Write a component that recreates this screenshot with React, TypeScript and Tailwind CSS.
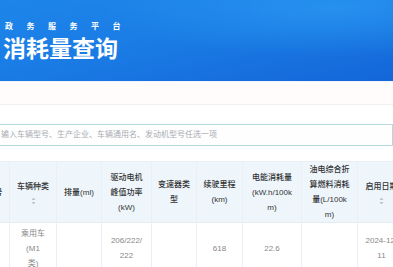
import React from 'react'

const font = '"Liberation Sans", "Noto Sans CJK SC", sans-serif'

function SortIcon() {
  return (
    <svg width="5" height="8" viewBox="0 0 5 8" className="mx-auto mt-[3px]">
      <path d="M2.5 0.5 L4.5 3 L0.5 3 Z" fill="#c0c4cc" />
      <path d="M2.5 7.5 L4.5 5 L0.5 5 Z" fill="#c0c4cc" />
    </svg>
  )
}

interface Col {
  width: string
  head: React.ReactNode
  cell: React.ReactNode
}

const cols: Col[] = [
  { width: 'w-[10px]', head: <div className="-ml-[36px] whitespace-nowrap">车辆型号</div>, cell: null },
  {
    width: 'w-[47px]',
    head: (
      <>
        <div>车辆种类</div>
        <SortIcon />
      </>
    ),
    cell: (
      <>
        乘用车
        <br />
        (M1
        <br />
        类)
      </>
    ),
  },
  { width: 'w-[45px]', head: <>排量(ml)</>, cell: null },
  {
    width: 'w-[50px]',
    head: (
      <>
        驱动电机
        <br />
        峰值功率
        <br />
        (kW)
      </>
    ),
    cell: (
      <>
        206/222/
        <br />
        222
      </>
    ),
  },
  {
    width: 'w-[45px]',
    head: (
      <>
        变速器类
        <br />型
      </>
    ),
    cell: null,
  },
  {
    width: 'w-[46px]',
    head: (
      <>
        续驶里程
        <br />
        (km)
      </>
    ),
    cell: <>618</>,
  },
  {
    width: 'w-[59px]',
    head: (
      <>
        电能消耗量
        <br />
        (kW.h/100k
        <br />
        m)
      </>
    ),
    cell: <>22.6</>,
  },
  {
    width: 'w-[56px]',
    head: (
      <>
        油电综合折
        <br />
        算燃料消耗
        <br />
        量(L/100k
        <br />
        m)
      </>
    ),
    cell: null,
  },
  {
    width: 'w-[48px]',
    head: (
      <>
        <div className="whitespace-nowrap">启用日期</div>
        <SortIcon />
      </>
    ),
    cell: (
      <>
        <span className="whitespace-nowrap">2024-12-</span>
        <br />
        11
      </>
    ),
  },
]

export default function App() {
  return (
    <div className="w-[393px] h-[267px] overflow-hidden bg-white" style={{ fontFamily: font }}>
      {/* Banner */}
      <div className="h-[81px] bg-gradient-to-br from-[#1d86ea] via-[#1a7ae4] to-[#1466d8] relative overflow-hidden">
        <svg className="absolute inset-0" width="393" height="81" viewBox="0 0 393 81">
          <defs>
            <radialGradient id="glow" cx="85%" cy="10%" r="60%">
              <stop offset="0%" stopColor="#2ea0f5" stopOpacity={0.6} />
              <stop offset="100%" stopColor="#2ea0f5" stopOpacity={0} />
            </radialGradient>
          </defs>
          <rect width="393" height="81" fill="url(#glow)" />
        </svg>
        <div className="relative pt-[21px]">
          <div className="pl-[5px] text-[8px] leading-[12px] text-white font-bold tracking-[13.5px]">政务服务平台</div>
          <div className="pl-[3px] mt-[3px] text-[23px] leading-[26px] text-white font-bold">消耗量查询</div>
        </div>
      </div>

      {/* Filter area */}
      <div className="h-[24px] bg-[#fffcfb] border-t border-[#eef4fa] border-b border-b-[#f0f0f0]" />
      <div className="pt-[19px] pb-[15px]">
        <div className="-ml-[10px] h-[22px] border border-[#b5dadd] bg-[#fefefe] flex items-center pl-[10px]">
          <span className="text-[8px] text-[#a8abb2] whitespace-nowrap">
            输入车辆型号、生产企业、车辆通用名、发动机型号任选一项
          </span>
        </div>
      </div>

      {/* Table */}
      <div className="flex border-t border-[#ebeef5]">
        {cols.map((c, i) => (
          <div key={i} className={`${c.width} shrink-0 flex flex-col border-r border-[#ebeef5]`}>
            <div className="h-[61px] bg-[#eef6fc] flex flex-col items-center justify-center text-center text-[8px] leading-[15px] text-[#333] font-medium border-b border-[#e4ecf3] overflow-hidden">
              <div>{c.head}</div>
            </div>
            <div className="h-[50px] flex items-center justify-center text-center text-[8px] leading-[15px] text-[#888] overflow-hidden">
              <div>{c.cell}</div>
            </div>
          </div>
        ))}
      </div>
    </div>
  )
}
